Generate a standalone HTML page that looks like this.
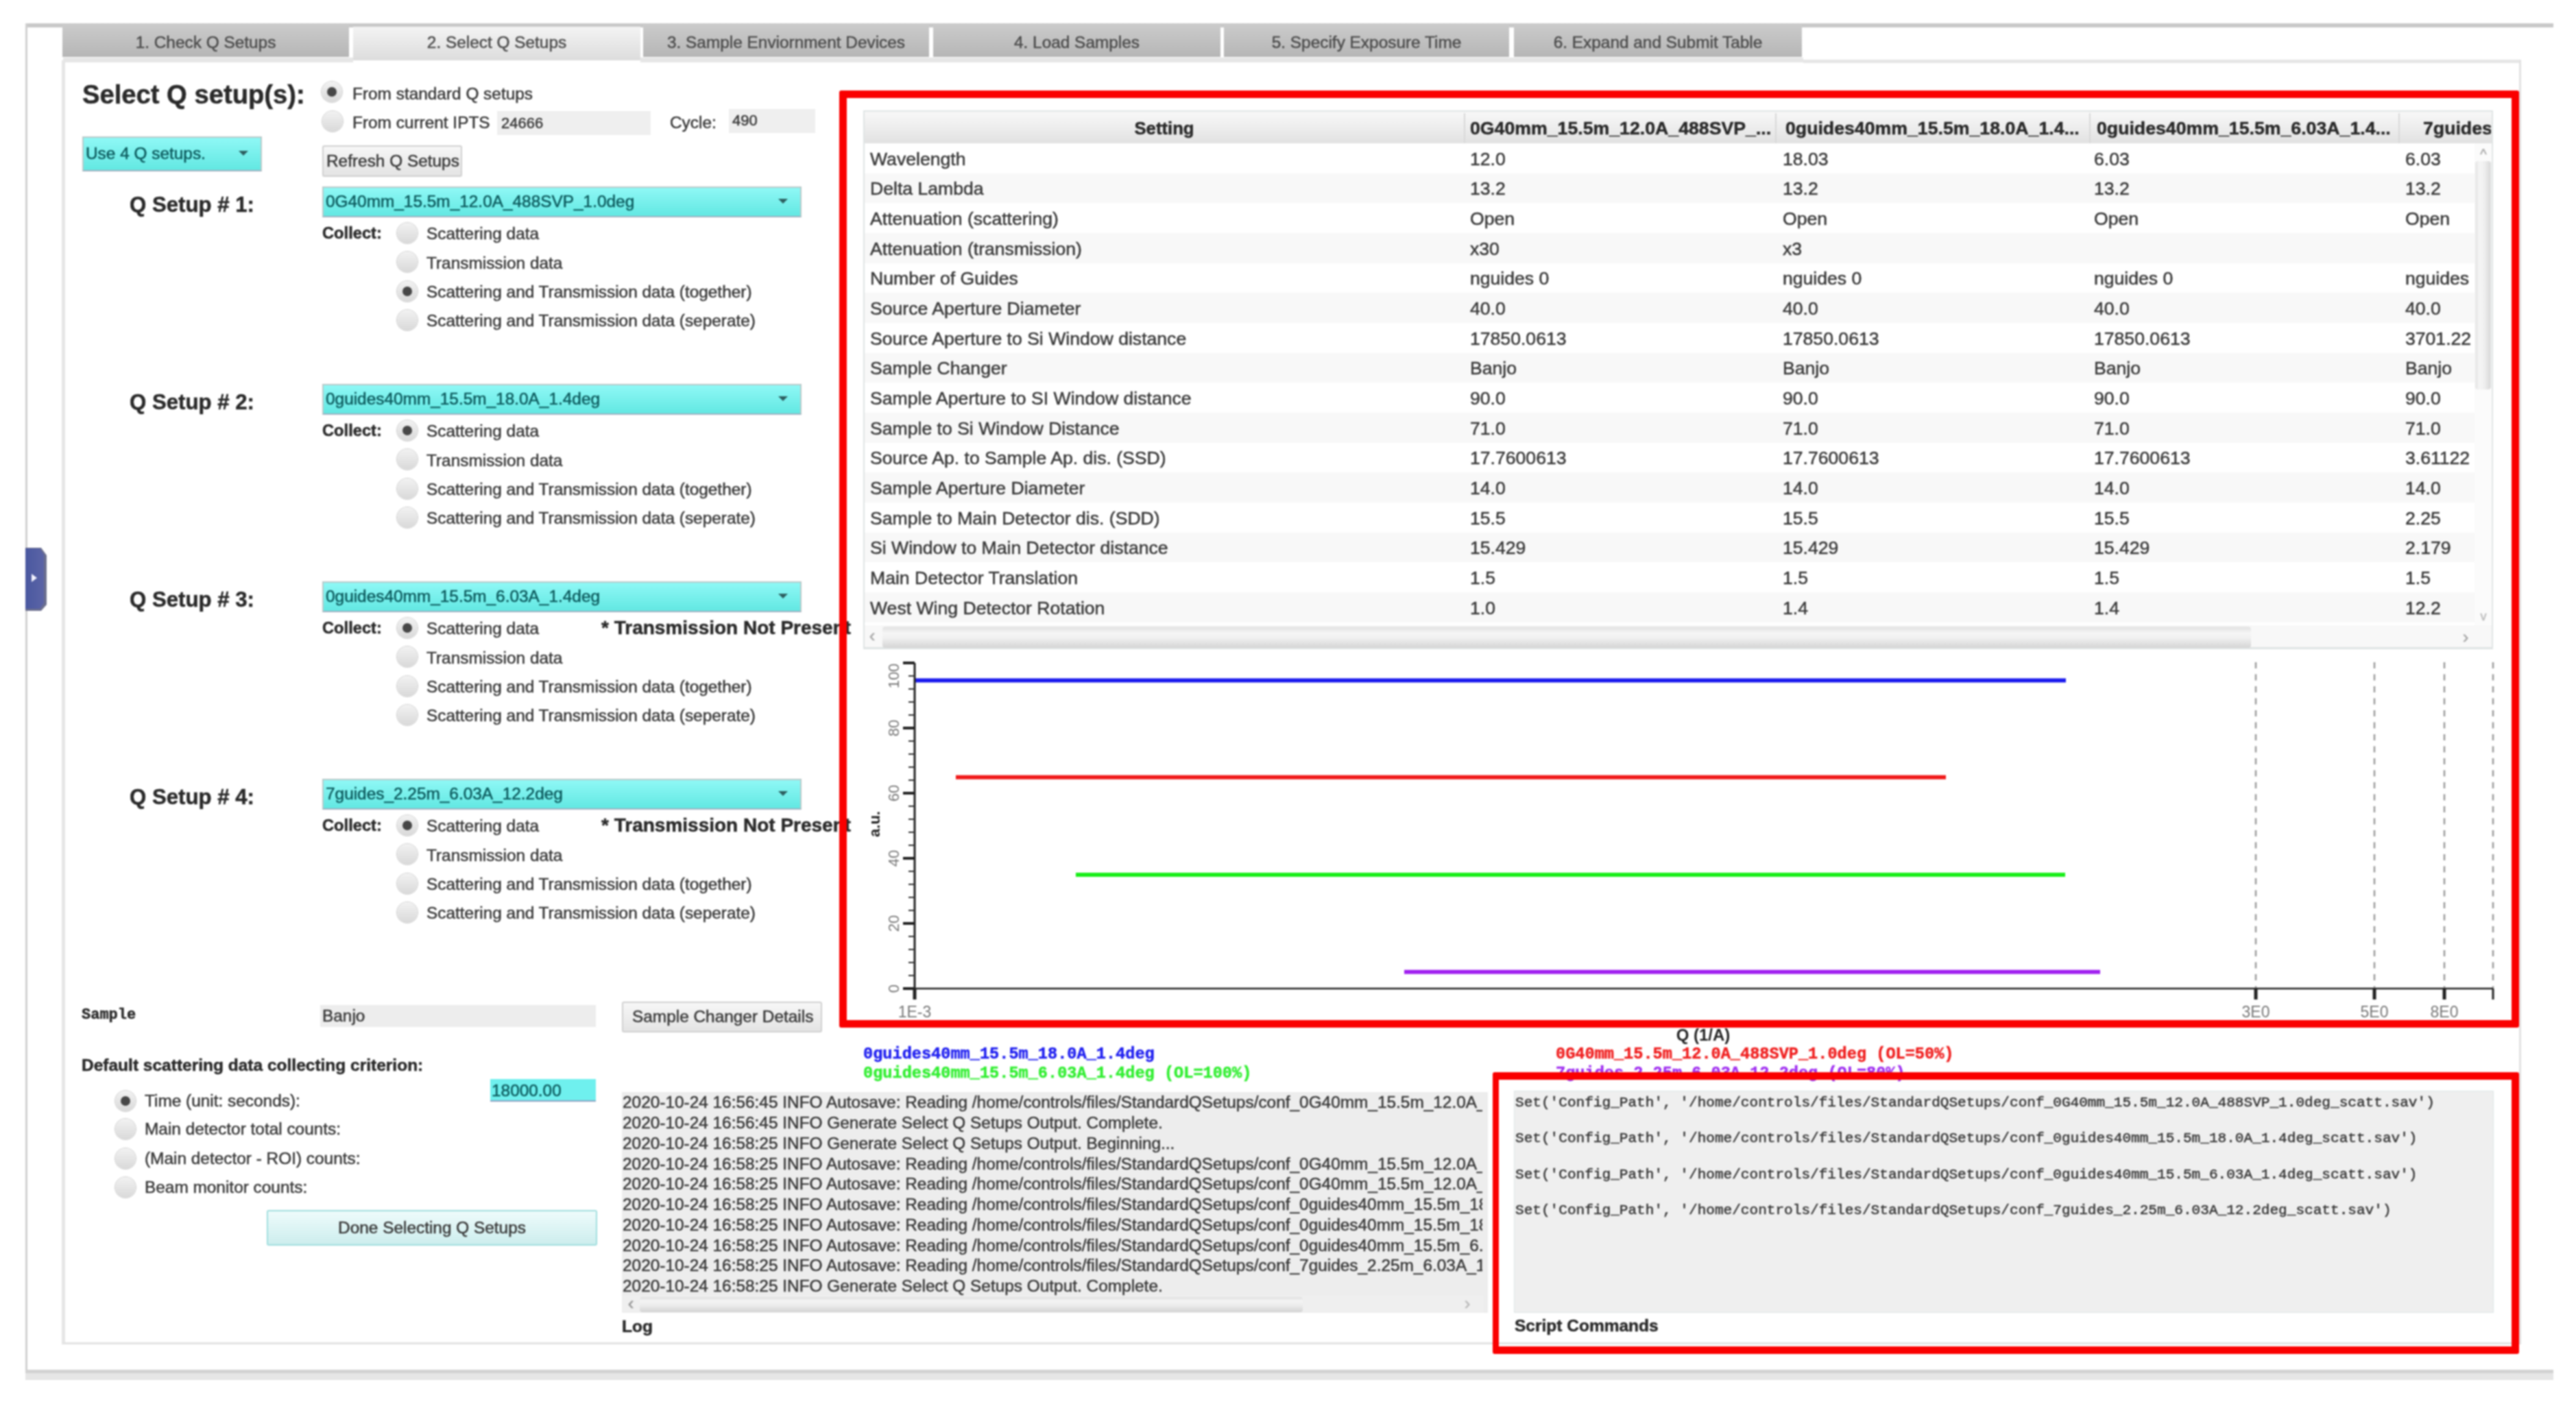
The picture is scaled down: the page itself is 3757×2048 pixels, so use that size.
<!DOCTYPE html>
<html><head><meta charset="utf-8"><style>
html,body{margin:0;padding:0;background:#fff;}
body{width:3757px;height:2048px;position:relative;overflow:hidden;font-family:'Liberation Sans', sans-serif;}
.a{position:absolute;white-space:nowrap;-webkit-text-stroke:0.5px currentColor;}
body{filter:blur(0.9px);}
</style></head><body>
<div class="a" style="left:37px;top:34px;width:3687px;height:5.5px;background:#c9c9c9;"></div><div class="a" style="left:37px;top:34px;width:3px;height:1978px;background:#d0d0d0;"></div><div class="a" style="left:37px;top:1998px;width:3687px;height:5px;background:#d2d2d2;"></div><div class="a" style="left:37px;top:2003px;width:3687px;height:10px;background:#e6e6e6;"></div><div class="a" style="left:91px;top:35px;width:418px;height:48px;background:linear-gradient(#cbcbcb,#b6b6b6);"></div><div class="a" style="left:-700.0px;width:2000px;text-align:center;top:50.3px;font-size:24.4px;line-height:24.4px;font-weight:400;color:#4e4e4e;font-family:'Liberation Sans', sans-serif;">1. Check Q Setups</div><div class="a" style="left:515px;top:39px;width:419px;height:49px;background:linear-gradient(#f4f4f4,#dcdcdc);"></div><div class="a" style="left:-275.5px;width:2000px;text-align:center;top:50.3px;font-size:24.4px;line-height:24.4px;font-weight:400;color:#4e4e4e;font-family:'Liberation Sans', sans-serif;">2. Select Q Setups</div><div class="a" style="left:938px;top:35px;width:417px;height:48px;background:linear-gradient(#cbcbcb,#b6b6b6);"></div><div class="a" style="left:146.5px;width:2000px;text-align:center;top:50.3px;font-size:24.4px;line-height:24.4px;font-weight:400;color:#4e4e4e;font-family:'Liberation Sans', sans-serif;">3. Sample Enviornment Devices</div><div class="a" style="left:1361px;top:35px;width:419px;height:48px;background:linear-gradient(#cbcbcb,#b6b6b6);"></div><div class="a" style="left:570.5px;width:2000px;text-align:center;top:50.3px;font-size:24.4px;line-height:24.4px;font-weight:400;color:#4e4e4e;font-family:'Liberation Sans', sans-serif;">4. Load Samples</div><div class="a" style="left:1785px;top:35px;width:416px;height:48px;background:linear-gradient(#cbcbcb,#b6b6b6);"></div><div class="a" style="left:993.0px;width:2000px;text-align:center;top:50.3px;font-size:24.4px;line-height:24.4px;font-weight:400;color:#4e4e4e;font-family:'Liberation Sans', sans-serif;">5. Specify Exposure Time</div><div class="a" style="left:2208px;top:35px;width:420px;height:48px;background:linear-gradient(#cbcbcb,#b6b6b6);"></div><div class="a" style="left:1418.0px;width:2000px;text-align:center;top:50.3px;font-size:24.4px;line-height:24.4px;font-weight:400;color:#4e4e4e;font-family:'Liberation Sans', sans-serif;">6. Expand and Submit Table</div><div class="a" style="left:92px;top:84px;width:423px;height:7px;background:#e6e6e6;"></div><div class="a" style="left:934px;top:84px;width:1696px;height:7px;background:#e6e6e6;"></div><div class="a" style="left:2630px;top:87px;width:1047px;height:5px;background:#e6e6e6;"></div><div class="a" style="left:90px;top:88px;width:3587px;height:1873px;border:3px solid #e2e2e2;border-left:5px solid #e6e6e6;border-top:none;box-sizing:border-box;"></div><div class="a" style="left:37px;top:799px;width:31px;height:92px;background:#6a6e8e;clip-path:polygon(0 0,23px 0,31px 11px,31px 83px,23px 92px,0 92px);"></div><div class="a" style="left:37px;top:800px;width:27px;height:88px;background:linear-gradient(90deg,#4a58a0,#5b64a6);clip-path:polygon(0 0,21px 0,27px 9px,27px 80px,21px 88px,0 88px);"></div><div class="a" style="left:46px;top:837px;width:0;height:0;border-left:8px solid #f4f4ff;border-top:6px solid transparent;border-bottom:6px solid transparent;"></div><div class="a" style="left:120.0px;top:118.7px;font-size:38.2px;line-height:38.2px;font-weight:700;color:#2a2a2a;font-family:'Liberation Sans', sans-serif;">Select Q setup(s):</div><div class="a" style="left:469px;top:119px;width:30px;height:30px;border-radius:50%;background:linear-gradient(#f2f2f2,#d9d9d9);box-shadow:0 0 0 1px #d0d0d0;"></div><div class="a" style="left:477.0px;top:127.0px;width:14px;height:14px;border-radius:50%;background:#474747;"></div><div class="a" style="left:514.0px;top:125.3px;font-size:24.4px;line-height:24.4px;font-weight:400;color:#3a3a3a;font-family:'Liberation Sans', sans-serif;">From standard Q setups</div><div class="a" style="left:470px;top:162px;width:30px;height:30px;border-radius:50%;background:linear-gradient(#f2f2f2,#d9d9d9);box-shadow:0 0 0 1px #d0d0d0;"></div><div class="a" style="left:514.0px;top:167.3px;font-size:24.4px;line-height:24.4px;font-weight:400;color:#3a3a3a;font-family:'Liberation Sans', sans-serif;">From current IPTS</div><div class="a" style="left:725px;top:162px;width:224px;height:35px;background:#efefef;"></div><div class="a" style="left:731.0px;top:169.4px;font-size:22px;line-height:22px;font-weight:400;color:#3a3a3a;font-family:'Liberation Sans', sans-serif;">24666</div><div class="a" style="left:977.0px;top:167.3px;font-size:24.4px;line-height:24.4px;font-weight:400;color:#3a3a3a;font-family:'Liberation Sans', sans-serif;">Cycle:</div><div class="a" style="left:1063px;top:159px;width:126px;height:35px;background:#efefef;"></div><div class="a" style="left:1068.0px;top:165.4px;font-size:22px;line-height:22px;font-weight:400;color:#3a3a3a;font-family:'Liberation Sans', sans-serif;">490</div><div class="a" style="left:120px;top:199px;width:262px;height:51px;box-sizing:border-box;border:2px solid #b9c9c9;border-bottom-color:#9fb0c0;background:linear-gradient(#8ff8f6,#62e8e2);"></div><div class="a" style="left:125.0px;top:212.3px;font-size:24.4px;line-height:24.4px;font-weight:400;color:#0d5b5e;font-family:'Liberation Sans', sans-serif;">Use 4 Q setups.</div><div class="a" style="left:348px;top:219.5px;width:0;height:0;border-top:7px solid #2d5f60;border-left:7px solid transparent;border-right:7px solid transparent;"></div><div class="a" style="left:470px;top:212px;width:204px;height:46px;box-sizing:border-box;border:2px solid #d0d0d0;border-radius:3px;background:linear-gradient(#f7f7f7,#e4e4e4);"></div><div class="a" style="left:476.0px;top:223.3px;font-size:24.4px;line-height:24.4px;font-weight:400;color:#3a3a3a;font-family:'Liberation Sans', sans-serif;">Refresh Q Setups</div><div class="a" style="left:189.0px;top:282.6px;font-size:31.2px;line-height:31.2px;font-weight:700;color:#2a2a2a;font-family:'Liberation Sans', sans-serif;">Q Setup # 1:</div><div class="a" style="left:470px;top:272px;width:699px;height:45px;box-sizing:border-box;border:2px solid #b9c9c9;border-bottom-color:#9fb0c0;background:linear-gradient(#8ff8f6,#62e8e2);"></div><div class="a" style="left:475.0px;top:282.3px;font-size:24.4px;line-height:24.4px;font-weight:400;color:#0d5b5e;font-family:'Liberation Sans', sans-serif;">0G40mm_15.5m_12.0A_488SVP_1.0deg</div><div class="a" style="left:1135px;top:289.5px;width:0;height:0;border-top:7px solid #2d5f60;border-left:7px solid transparent;border-right:7px solid transparent;"></div><div class="a" style="left:470.0px;top:328.9px;font-size:23.7px;line-height:23.7px;font-weight:700;color:#2a2a2a;font-family:'Liberation Sans', sans-serif;">Collect:</div><div class="a" style="left:579px;top:325.0px;width:30px;height:30px;border-radius:50%;background:linear-gradient(#f2f2f2,#d9d9d9);box-shadow:0 0 0 1px #d0d0d0;"></div><div class="a" style="left:622.0px;top:329.3px;font-size:24.4px;line-height:24.4px;font-weight:400;color:#3a3a3a;font-family:'Liberation Sans', sans-serif;">Scattering data</div><div class="a" style="left:579px;top:367.3px;width:30px;height:30px;border-radius:50%;background:linear-gradient(#f2f2f2,#d9d9d9);box-shadow:0 0 0 1px #d0d0d0;"></div><div class="a" style="left:622.0px;top:371.6px;font-size:24.4px;line-height:24.4px;font-weight:400;color:#3a3a3a;font-family:'Liberation Sans', sans-serif;">Transmission data</div><div class="a" style="left:579px;top:409.6px;width:30px;height:30px;border-radius:50%;background:linear-gradient(#f2f2f2,#d9d9d9);box-shadow:0 0 0 1px #d0d0d0;"></div><div class="a" style="left:587.0px;top:417.6px;width:14px;height:14px;border-radius:50%;background:#474747;"></div><div class="a" style="left:622.0px;top:413.9px;font-size:24.4px;line-height:24.4px;font-weight:400;color:#3a3a3a;font-family:'Liberation Sans', sans-serif;">Scattering and Transmission data (together)</div><div class="a" style="left:579px;top:451.9px;width:30px;height:30px;border-radius:50%;background:linear-gradient(#f2f2f2,#d9d9d9);box-shadow:0 0 0 1px #d0d0d0;"></div><div class="a" style="left:622.0px;top:456.2px;font-size:24.4px;line-height:24.4px;font-weight:400;color:#3a3a3a;font-family:'Liberation Sans', sans-serif;">Scattering and Transmission data (seperate)</div><div class="a" style="left:189.0px;top:570.6px;font-size:31.2px;line-height:31.2px;font-weight:700;color:#2a2a2a;font-family:'Liberation Sans', sans-serif;">Q Setup # 2:</div><div class="a" style="left:470px;top:560px;width:699px;height:45px;box-sizing:border-box;border:2px solid #b9c9c9;border-bottom-color:#9fb0c0;background:linear-gradient(#8ff8f6,#62e8e2);"></div><div class="a" style="left:475.0px;top:570.3px;font-size:24.4px;line-height:24.4px;font-weight:400;color:#0d5b5e;font-family:'Liberation Sans', sans-serif;">0guides40mm_15.5m_18.0A_1.4deg</div><div class="a" style="left:1135px;top:577.5px;width:0;height:0;border-top:7px solid #2d5f60;border-left:7px solid transparent;border-right:7px solid transparent;"></div><div class="a" style="left:470.0px;top:616.9px;font-size:23.7px;line-height:23.7px;font-weight:700;color:#2a2a2a;font-family:'Liberation Sans', sans-serif;">Collect:</div><div class="a" style="left:579px;top:613.0px;width:30px;height:30px;border-radius:50%;background:linear-gradient(#f2f2f2,#d9d9d9);box-shadow:0 0 0 1px #d0d0d0;"></div><div class="a" style="left:587.0px;top:621.0px;width:14px;height:14px;border-radius:50%;background:#474747;"></div><div class="a" style="left:622.0px;top:617.3px;font-size:24.4px;line-height:24.4px;font-weight:400;color:#3a3a3a;font-family:'Liberation Sans', sans-serif;">Scattering data</div><div class="a" style="left:579px;top:655.3px;width:30px;height:30px;border-radius:50%;background:linear-gradient(#f2f2f2,#d9d9d9);box-shadow:0 0 0 1px #d0d0d0;"></div><div class="a" style="left:622.0px;top:659.6px;font-size:24.4px;line-height:24.4px;font-weight:400;color:#3a3a3a;font-family:'Liberation Sans', sans-serif;">Transmission data</div><div class="a" style="left:579px;top:697.6px;width:30px;height:30px;border-radius:50%;background:linear-gradient(#f2f2f2,#d9d9d9);box-shadow:0 0 0 1px #d0d0d0;"></div><div class="a" style="left:622.0px;top:701.9px;font-size:24.4px;line-height:24.4px;font-weight:400;color:#3a3a3a;font-family:'Liberation Sans', sans-serif;">Scattering and Transmission data (together)</div><div class="a" style="left:579px;top:739.9px;width:30px;height:30px;border-radius:50%;background:linear-gradient(#f2f2f2,#d9d9d9);box-shadow:0 0 0 1px #d0d0d0;"></div><div class="a" style="left:622.0px;top:744.2px;font-size:24.4px;line-height:24.4px;font-weight:400;color:#3a3a3a;font-family:'Liberation Sans', sans-serif;">Scattering and Transmission data (seperate)</div><div class="a" style="left:189.0px;top:858.6px;font-size:31.2px;line-height:31.2px;font-weight:700;color:#2a2a2a;font-family:'Liberation Sans', sans-serif;">Q Setup # 3:</div><div class="a" style="left:470px;top:848px;width:699px;height:45px;box-sizing:border-box;border:2px solid #b9c9c9;border-bottom-color:#9fb0c0;background:linear-gradient(#8ff8f6,#62e8e2);"></div><div class="a" style="left:475.0px;top:858.3px;font-size:24.4px;line-height:24.4px;font-weight:400;color:#0d5b5e;font-family:'Liberation Sans', sans-serif;">0guides40mm_15.5m_6.03A_1.4deg</div><div class="a" style="left:1135px;top:865.5px;width:0;height:0;border-top:7px solid #2d5f60;border-left:7px solid transparent;border-right:7px solid transparent;"></div><div class="a" style="left:470.0px;top:904.9px;font-size:23.7px;line-height:23.7px;font-weight:700;color:#2a2a2a;font-family:'Liberation Sans', sans-serif;">Collect:</div><div class="a" style="left:579px;top:901.0px;width:30px;height:30px;border-radius:50%;background:linear-gradient(#f2f2f2,#d9d9d9);box-shadow:0 0 0 1px #d0d0d0;"></div><div class="a" style="left:587.0px;top:909.0px;width:14px;height:14px;border-radius:50%;background:#474747;"></div><div class="a" style="left:622.0px;top:905.3px;font-size:24.4px;line-height:24.4px;font-weight:400;color:#3a3a3a;font-family:'Liberation Sans', sans-serif;">Scattering data</div><div class="a" style="left:579px;top:943.3px;width:30px;height:30px;border-radius:50%;background:linear-gradient(#f2f2f2,#d9d9d9);box-shadow:0 0 0 1px #d0d0d0;"></div><div class="a" style="left:622.0px;top:947.6px;font-size:24.4px;line-height:24.4px;font-weight:400;color:#3a3a3a;font-family:'Liberation Sans', sans-serif;">Transmission data</div><div class="a" style="left:579px;top:985.6px;width:30px;height:30px;border-radius:50%;background:linear-gradient(#f2f2f2,#d9d9d9);box-shadow:0 0 0 1px #d0d0d0;"></div><div class="a" style="left:622.0px;top:989.9px;font-size:24.4px;line-height:24.4px;font-weight:400;color:#3a3a3a;font-family:'Liberation Sans', sans-serif;">Scattering and Transmission data (together)</div><div class="a" style="left:579px;top:1027.9px;width:30px;height:30px;border-radius:50%;background:linear-gradient(#f2f2f2,#d9d9d9);box-shadow:0 0 0 1px #d0d0d0;"></div><div class="a" style="left:622.0px;top:1032.2px;font-size:24.4px;line-height:24.4px;font-weight:400;color:#3a3a3a;font-family:'Liberation Sans', sans-serif;">Scattering and Transmission data (seperate)</div><div class="a" style="left:877.0px;top:901.8px;font-size:28px;line-height:28px;font-weight:700;color:#2a2a2a;font-family:'Liberation Sans', sans-serif;">* Transmission Not Present</div><div class="a" style="left:189.0px;top:1146.6px;font-size:31.2px;line-height:31.2px;font-weight:700;color:#2a2a2a;font-family:'Liberation Sans', sans-serif;">Q Setup # 4:</div><div class="a" style="left:470px;top:1136px;width:699px;height:45px;box-sizing:border-box;border:2px solid #b9c9c9;border-bottom-color:#9fb0c0;background:linear-gradient(#8ff8f6,#62e8e2);"></div><div class="a" style="left:475.0px;top:1146.3px;font-size:24.4px;line-height:24.4px;font-weight:400;color:#0d5b5e;font-family:'Liberation Sans', sans-serif;">7guides_2.25m_6.03A_12.2deg</div><div class="a" style="left:1135px;top:1153.5px;width:0;height:0;border-top:7px solid #2d5f60;border-left:7px solid transparent;border-right:7px solid transparent;"></div><div class="a" style="left:470.0px;top:1192.9px;font-size:23.7px;line-height:23.7px;font-weight:700;color:#2a2a2a;font-family:'Liberation Sans', sans-serif;">Collect:</div><div class="a" style="left:579px;top:1189.0px;width:30px;height:30px;border-radius:50%;background:linear-gradient(#f2f2f2,#d9d9d9);box-shadow:0 0 0 1px #d0d0d0;"></div><div class="a" style="left:587.0px;top:1197.0px;width:14px;height:14px;border-radius:50%;background:#474747;"></div><div class="a" style="left:622.0px;top:1193.3px;font-size:24.4px;line-height:24.4px;font-weight:400;color:#3a3a3a;font-family:'Liberation Sans', sans-serif;">Scattering data</div><div class="a" style="left:579px;top:1231.3px;width:30px;height:30px;border-radius:50%;background:linear-gradient(#f2f2f2,#d9d9d9);box-shadow:0 0 0 1px #d0d0d0;"></div><div class="a" style="left:622.0px;top:1235.6px;font-size:24.4px;line-height:24.4px;font-weight:400;color:#3a3a3a;font-family:'Liberation Sans', sans-serif;">Transmission data</div><div class="a" style="left:579px;top:1273.6px;width:30px;height:30px;border-radius:50%;background:linear-gradient(#f2f2f2,#d9d9d9);box-shadow:0 0 0 1px #d0d0d0;"></div><div class="a" style="left:622.0px;top:1277.9px;font-size:24.4px;line-height:24.4px;font-weight:400;color:#3a3a3a;font-family:'Liberation Sans', sans-serif;">Scattering and Transmission data (together)</div><div class="a" style="left:579px;top:1315.9px;width:30px;height:30px;border-radius:50%;background:linear-gradient(#f2f2f2,#d9d9d9);box-shadow:0 0 0 1px #d0d0d0;"></div><div class="a" style="left:622.0px;top:1320.2px;font-size:24.4px;line-height:24.4px;font-weight:400;color:#3a3a3a;font-family:'Liberation Sans', sans-serif;">Scattering and Transmission data (seperate)</div><div class="a" style="left:877.0px;top:1189.8px;font-size:28px;line-height:28px;font-weight:700;color:#2a2a2a;font-family:'Liberation Sans', sans-serif;">* Transmission Not Present</div><div class="a" style="left:119.0px;top:1470.1px;font-size:22px;line-height:22px;font-weight:700;color:#2a2a2a;font-family:'Liberation Mono', monospace;">Sample</div><div class="a" style="left:467px;top:1466px;width:402px;height:32px;background:#ededed;"></div><div class="a" style="left:470.0px;top:1470.3px;font-size:24.4px;line-height:24.4px;font-weight:400;color:#3a3a3a;font-family:'Liberation Sans', sans-serif;">Banjo</div><div class="a" style="left:907px;top:1461px;width:292px;height:45px;box-sizing:border-box;border:2px solid #d0d0d0;border-radius:3px;background:linear-gradient(#f7f7f7,#e4e4e4);"></div><div class="a" style="left:922.0px;top:1471.3px;font-size:24.4px;line-height:24.4px;font-weight:400;color:#3a3a3a;font-family:'Liberation Sans', sans-serif;">Sample Changer Details</div><div class="a" style="left:119.0px;top:1542.3px;font-size:24.5px;line-height:24.5px;font-weight:700;color:#2a2a2a;font-family:'Liberation Sans', sans-serif;">Default scattering data collecting criterion:</div><div class="a" style="left:715px;top:1574px;width:154px;height:33px;background:#6ff0ee;border-bottom:2px solid #8aa0c0;box-sizing:border-box;"></div><div class="a" style="left:717.0px;top:1579.3px;font-size:24.4px;line-height:24.4px;font-weight:400;color:#0d5b5e;font-family:'Liberation Sans', sans-serif;">18000.00</div><div class="a" style="left:168px;top:1591px;width:30px;height:30px;border-radius:50%;background:linear-gradient(#f2f2f2,#d9d9d9);box-shadow:0 0 0 1px #d0d0d0;"></div><div class="a" style="left:176.0px;top:1599.0px;width:14px;height:14px;border-radius:50%;background:#474747;"></div><div class="a" style="left:211.0px;top:1594.3px;font-size:24.4px;line-height:24.4px;font-weight:400;color:#3a3a3a;font-family:'Liberation Sans', sans-serif;">Time (unit: seconds):</div><div class="a" style="left:168px;top:1632px;width:30px;height:30px;border-radius:50%;background:linear-gradient(#f2f2f2,#d9d9d9);box-shadow:0 0 0 1px #d0d0d0;"></div><div class="a" style="left:211.0px;top:1635.3px;font-size:24.4px;line-height:24.4px;font-weight:400;color:#3a3a3a;font-family:'Liberation Sans', sans-serif;">Main detector total counts:</div><div class="a" style="left:168px;top:1675px;width:30px;height:30px;border-radius:50%;background:linear-gradient(#f2f2f2,#d9d9d9);box-shadow:0 0 0 1px #d0d0d0;"></div><div class="a" style="left:211.0px;top:1678.3px;font-size:24.4px;line-height:24.4px;font-weight:400;color:#3a3a3a;font-family:'Liberation Sans', sans-serif;">(Main detector - ROI) counts:</div><div class="a" style="left:168px;top:1717px;width:30px;height:30px;border-radius:50%;background:linear-gradient(#f2f2f2,#d9d9d9);box-shadow:0 0 0 1px #d0d0d0;"></div><div class="a" style="left:211.0px;top:1720.3px;font-size:24.4px;line-height:24.4px;font-weight:400;color:#3a3a3a;font-family:'Liberation Sans', sans-serif;">Beam monitor counts:</div><div class="a" style="left:389px;top:1765px;width:482px;height:52px;box-sizing:border-box;border:2px solid #9fdede;border-radius:3px;background:linear-gradient(#eefbfb,#cdeeee);"></div><div class="a" style="left:-370.0px;width:2000px;text-align:center;top:1779.3px;font-size:24.4px;line-height:24.4px;font-weight:400;color:#3a3a3a;font-family:'Liberation Sans', sans-serif;">Done Selecting Q Setups</div><div class="a" style="left:907px;top:1593px;width:1263px;height:322px;background:#ededed;"></div><div class="a" style="left:907px;top:1593px;width:1255px;height:300px;overflow:hidden;"><div class="a" style="left:1px;top:3.3px;font-size:24.4px;line-height:24.4px;color:#3a3a3a;white-space:nowrap;">2020-10-24 16:56:45 INFO Autosave: Reading /home/controls/files/StandardQSetups/conf_0G40mm_15.5m_12.0A_488SVP_1.0deg</div><div class="a" style="left:1px;top:33.1px;font-size:24.4px;line-height:24.4px;color:#3a3a3a;white-space:nowrap;">2020-10-24 16:56:45 INFO Generate Select Q Setups Output. Complete.</div><div class="a" style="left:1px;top:62.8px;font-size:24.4px;line-height:24.4px;color:#3a3a3a;white-space:nowrap;">2020-10-24 16:58:25 INFO Generate Select Q Setups Output. Beginning...</div><div class="a" style="left:1px;top:92.6px;font-size:24.4px;line-height:24.4px;color:#3a3a3a;white-space:nowrap;">2020-10-24 16:58:25 INFO Autosave: Reading /home/controls/files/StandardQSetups/conf_0G40mm_15.5m_12.0A_488SVP_1.0deg</div><div class="a" style="left:1px;top:122.3px;font-size:24.4px;line-height:24.4px;color:#3a3a3a;white-space:nowrap;">2020-10-24 16:58:25 INFO Autosave: Reading /home/controls/files/StandardQSetups/conf_0G40mm_15.5m_12.0A_488SVP_1.0deg</div><div class="a" style="left:1px;top:152.1px;font-size:24.4px;line-height:24.4px;color:#3a3a3a;white-space:nowrap;">2020-10-24 16:58:25 INFO Autosave: Reading /home/controls/files/StandardQSetups/conf_0guides40mm_15.5m_18.0A_1.4deg</div><div class="a" style="left:1px;top:181.8px;font-size:24.4px;line-height:24.4px;color:#3a3a3a;white-space:nowrap;">2020-10-24 16:58:25 INFO Autosave: Reading /home/controls/files/StandardQSetups/conf_0guides40mm_15.5m_18.0A_1.4deg</div><div class="a" style="left:1px;top:211.6px;font-size:24.4px;line-height:24.4px;color:#3a3a3a;white-space:nowrap;">2020-10-24 16:58:25 INFO Autosave: Reading /home/controls/files/StandardQSetups/conf_0guides40mm_15.5m_6.03A_1.4deg</div><div class="a" style="left:1px;top:241.3px;font-size:24.4px;line-height:24.4px;color:#3a3a3a;white-space:nowrap;">2020-10-24 16:58:25 INFO Autosave: Reading /home/controls/files/StandardQSetups/conf_7guides_2.25m_6.03A_12.2deg</div><div class="a" style="left:1px;top:271.1px;font-size:24.4px;line-height:24.4px;color:#3a3a3a;white-space:nowrap;">2020-10-24 16:58:25 INFO Generate Select Q Setups Output. Complete.</div></div><div class="a" style="left:907px;top:1890px;width:1257px;height:25px;background:#efefef;"></div><div class="a" style="left:933px;top:1892px;width:967px;height:22px;background:linear-gradient(#dedede 0%,#f4f4f4 25%,#ececec 55%,#d3d3d3 100%);border-radius:4px;"></div><div class="a" style="left:-80.0px;width:2000px;text-align:center;top:1888.0px;font-size:26px;line-height:26px;font-weight:400;color:#999;font-family:'Liberation Sans', sans-serif;">‹</div><div class="a" style="left:1140.0px;width:2000px;text-align:center;top:1888.0px;font-size:26px;line-height:26px;font-weight:400;color:#bbb;font-family:'Liberation Sans', sans-serif;">›</div><div class="a" style="left:907.0px;top:1922.8px;font-size:24.5px;line-height:24.5px;font-weight:700;color:#2a2a2a;font-family:'Liberation Sans', sans-serif;">Log</div><div class="a" style="left:2209px;top:1592px;width:1427px;height:322px;background:#efefef;box-shadow:0 0 0 1px #dde6e6;"></div><div class="a" style="left:2210.0px;top:1597.8px;font-size:21.08px;line-height:21.08px;font-weight:400;color:#383838;font-family:'Liberation Mono', monospace;">Set(&#x27;Config_Path&#x27;, &#x27;/home/controls/files/StandardQSetups/conf_0G40mm_15.5m_12.0A_488SVP_1.0deg_scatt.sav&#x27;)</div><div class="a" style="left:2210.0px;top:1650.2px;font-size:21.08px;line-height:21.08px;font-weight:400;color:#383838;font-family:'Liberation Mono', monospace;">Set(&#x27;Config_Path&#x27;, &#x27;/home/controls/files/StandardQSetups/conf_0guides40mm_15.5m_18.0A_1.4deg_scatt.sav&#x27;)</div><div class="a" style="left:2210.0px;top:1702.6px;font-size:21.08px;line-height:21.08px;font-weight:400;color:#383838;font-family:'Liberation Mono', monospace;">Set(&#x27;Config_Path&#x27;, &#x27;/home/controls/files/StandardQSetups/conf_0guides40mm_15.5m_6.03A_1.4deg_scatt.sav&#x27;)</div><div class="a" style="left:2210.0px;top:1755.0px;font-size:21.08px;line-height:21.08px;font-weight:400;color:#383838;font-family:'Liberation Mono', monospace;">Set(&#x27;Config_Path&#x27;, &#x27;/home/controls/files/StandardQSetups/conf_7guides_2.25m_6.03A_12.2deg_scatt.sav&#x27;)</div><div class="a" style="left:2209.0px;top:1922.3px;font-size:24.5px;line-height:24.5px;font-weight:700;color:#2a2a2a;font-family:'Liberation Sans', sans-serif;">Script Commands</div><div class="a" style="left:1259px;top:161px;width:2377px;height:786px;background:#fff;border:2px solid #dfe4e4;box-sizing:border-box;"></div><div class="a" style="left:1261px;top:163px;width:2373px;height:46px;background:linear-gradient(#f8f8f8,#e2e2e2);"></div><div class="a" style="left:2135px;top:165px;width:2px;height:44px;background:#d8d8d8;"></div><div class="a" style="left:2589px;top:165px;width:2px;height:44px;background:#d8d8d8;"></div><div class="a" style="left:3047px;top:165px;width:2px;height:44px;background:#d8d8d8;"></div><div class="a" style="left:3498px;top:165px;width:2px;height:44px;background:#d8d8d8;"></div><div class="a" style="left:698.0px;width:2000px;text-align:center;top:175.2px;font-size:25.7px;line-height:25.7px;font-weight:700;color:#2a2a2a;font-family:'Liberation Sans', sans-serif;">Setting</div><div class="a" style="left:2144.0px;top:174.4px;font-size:26.7px;line-height:26.7px;font-weight:700;color:#2a2a2a;font-family:'Liberation Sans', sans-serif;">0G40mm_15.5m_12.0A_488SVP_...</div><div class="a" style="left:2604.0px;top:174.4px;font-size:26.7px;line-height:26.7px;font-weight:700;color:#2a2a2a;font-family:'Liberation Sans', sans-serif;">0guides40mm_15.5m_18.0A_1.4...</div><div class="a" style="left:3058.0px;top:174.4px;font-size:26.7px;line-height:26.7px;font-weight:700;color:#2a2a2a;font-family:'Liberation Sans', sans-serif;">0guides40mm_15.5m_6.03A_1.4...</div><div class="a" style="left:3498px;top:161px;width:135px;height:48px;overflow:hidden;"><div class="a" style="left:36px;top:13.4px;font-size:26.7px;line-height:26.7px;font-weight:700;color:#2a2a2a;white-space:nowrap;">7guides_2.25m_6.03A_1.4...</div></div><div class="a" style="left:1269.0px;top:218.5px;font-size:26.6px;line-height:26.6px;font-weight:400;color:#3a3a3a;font-family:'Liberation Sans', sans-serif;">Wavelength</div><div class="a" style="left:2144.0px;top:218.5px;font-size:26.6px;line-height:26.6px;font-weight:400;color:#3a3a3a;font-family:'Liberation Sans', sans-serif;">12.0</div><div class="a" style="left:2600.0px;top:218.5px;font-size:26.6px;line-height:26.6px;font-weight:400;color:#3a3a3a;font-family:'Liberation Sans', sans-serif;">18.03</div><div class="a" style="left:3054.0px;top:218.5px;font-size:26.6px;line-height:26.6px;font-weight:400;color:#3a3a3a;font-family:'Liberation Sans', sans-serif;">6.03</div><div class="a" style="left:3508px;top:218.5px;width:101px;overflow:hidden;font-size:26.6px;line-height:26.6px;color:#3a3a3a;white-space:nowrap;">6.03</div><div class="a" style="left:1261px;top:253px;width:2348px;height:43px;background:#f8f8f8;"></div><div class="a" style="left:1269.0px;top:262.2px;font-size:26.6px;line-height:26.6px;font-weight:400;color:#3a3a3a;font-family:'Liberation Sans', sans-serif;">Delta Lambda</div><div class="a" style="left:2144.0px;top:262.2px;font-size:26.6px;line-height:26.6px;font-weight:400;color:#3a3a3a;font-family:'Liberation Sans', sans-serif;">13.2</div><div class="a" style="left:2600.0px;top:262.2px;font-size:26.6px;line-height:26.6px;font-weight:400;color:#3a3a3a;font-family:'Liberation Sans', sans-serif;">13.2</div><div class="a" style="left:3054.0px;top:262.2px;font-size:26.6px;line-height:26.6px;font-weight:400;color:#3a3a3a;font-family:'Liberation Sans', sans-serif;">13.2</div><div class="a" style="left:3508px;top:262.2px;width:101px;overflow:hidden;font-size:26.6px;line-height:26.6px;color:#3a3a3a;white-space:nowrap;">13.2</div><div class="a" style="left:1269.0px;top:305.8px;font-size:26.6px;line-height:26.6px;font-weight:400;color:#3a3a3a;font-family:'Liberation Sans', sans-serif;">Attenuation (scattering)</div><div class="a" style="left:2144.0px;top:305.8px;font-size:26.6px;line-height:26.6px;font-weight:400;color:#3a3a3a;font-family:'Liberation Sans', sans-serif;">Open</div><div class="a" style="left:2600.0px;top:305.8px;font-size:26.6px;line-height:26.6px;font-weight:400;color:#3a3a3a;font-family:'Liberation Sans', sans-serif;">Open</div><div class="a" style="left:3054.0px;top:305.8px;font-size:26.6px;line-height:26.6px;font-weight:400;color:#3a3a3a;font-family:'Liberation Sans', sans-serif;">Open</div><div class="a" style="left:3508px;top:305.8px;width:101px;overflow:hidden;font-size:26.6px;line-height:26.6px;color:#3a3a3a;white-space:nowrap;">Open</div><div class="a" style="left:1261px;top:340px;width:2348px;height:44px;background:#f8f8f8;"></div><div class="a" style="left:1269.0px;top:349.5px;font-size:26.6px;line-height:26.6px;font-weight:400;color:#3a3a3a;font-family:'Liberation Sans', sans-serif;">Attenuation (transmission)</div><div class="a" style="left:2144.0px;top:349.5px;font-size:26.6px;line-height:26.6px;font-weight:400;color:#3a3a3a;font-family:'Liberation Sans', sans-serif;">x30</div><div class="a" style="left:2600.0px;top:349.5px;font-size:26.6px;line-height:26.6px;font-weight:400;color:#3a3a3a;font-family:'Liberation Sans', sans-serif;">x3</div><div class="a" style="left:3054.0px;top:349.5px;font-size:26.6px;line-height:26.6px;font-weight:400;color:#3a3a3a;font-family:'Liberation Sans', sans-serif;"></div><div class="a" style="left:3508px;top:349.5px;width:101px;overflow:hidden;font-size:26.6px;line-height:26.6px;color:#3a3a3a;white-space:nowrap;"></div><div class="a" style="left:1269.0px;top:393.2px;font-size:26.6px;line-height:26.6px;font-weight:400;color:#3a3a3a;font-family:'Liberation Sans', sans-serif;">Number of Guides</div><div class="a" style="left:2144.0px;top:393.2px;font-size:26.6px;line-height:26.6px;font-weight:400;color:#3a3a3a;font-family:'Liberation Sans', sans-serif;">nguides 0</div><div class="a" style="left:2600.0px;top:393.2px;font-size:26.6px;line-height:26.6px;font-weight:400;color:#3a3a3a;font-family:'Liberation Sans', sans-serif;">nguides 0</div><div class="a" style="left:3054.0px;top:393.2px;font-size:26.6px;line-height:26.6px;font-weight:400;color:#3a3a3a;font-family:'Liberation Sans', sans-serif;">nguides 0</div><div class="a" style="left:3508px;top:393.2px;width:101px;overflow:hidden;font-size:26.6px;line-height:26.6px;color:#3a3a3a;white-space:nowrap;">nguides 7</div><div class="a" style="left:1261px;top:427px;width:2348px;height:44px;background:#f8f8f8;"></div><div class="a" style="left:1269.0px;top:436.8px;font-size:26.6px;line-height:26.6px;font-weight:400;color:#3a3a3a;font-family:'Liberation Sans', sans-serif;">Source Aperture Diameter</div><div class="a" style="left:2144.0px;top:436.8px;font-size:26.6px;line-height:26.6px;font-weight:400;color:#3a3a3a;font-family:'Liberation Sans', sans-serif;">40.0</div><div class="a" style="left:2600.0px;top:436.8px;font-size:26.6px;line-height:26.6px;font-weight:400;color:#3a3a3a;font-family:'Liberation Sans', sans-serif;">40.0</div><div class="a" style="left:3054.0px;top:436.8px;font-size:26.6px;line-height:26.6px;font-weight:400;color:#3a3a3a;font-family:'Liberation Sans', sans-serif;">40.0</div><div class="a" style="left:3508px;top:436.8px;width:101px;overflow:hidden;font-size:26.6px;line-height:26.6px;color:#3a3a3a;white-space:nowrap;">40.0</div><div class="a" style="left:1269.0px;top:480.5px;font-size:26.6px;line-height:26.6px;font-weight:400;color:#3a3a3a;font-family:'Liberation Sans', sans-serif;">Source Aperture to Si Window distance</div><div class="a" style="left:2144.0px;top:480.5px;font-size:26.6px;line-height:26.6px;font-weight:400;color:#3a3a3a;font-family:'Liberation Sans', sans-serif;">17850.0613</div><div class="a" style="left:2600.0px;top:480.5px;font-size:26.6px;line-height:26.6px;font-weight:400;color:#3a3a3a;font-family:'Liberation Sans', sans-serif;">17850.0613</div><div class="a" style="left:3054.0px;top:480.5px;font-size:26.6px;line-height:26.6px;font-weight:400;color:#3a3a3a;font-family:'Liberation Sans', sans-serif;">17850.0613</div><div class="a" style="left:3508px;top:480.5px;width:101px;overflow:hidden;font-size:26.6px;line-height:26.6px;color:#3a3a3a;white-space:nowrap;">3701.22</div><div class="a" style="left:1261px;top:515px;width:2348px;height:43px;background:#f8f8f8;"></div><div class="a" style="left:1269.0px;top:524.2px;font-size:26.6px;line-height:26.6px;font-weight:400;color:#3a3a3a;font-family:'Liberation Sans', sans-serif;">Sample Changer</div><div class="a" style="left:2144.0px;top:524.2px;font-size:26.6px;line-height:26.6px;font-weight:400;color:#3a3a3a;font-family:'Liberation Sans', sans-serif;">Banjo</div><div class="a" style="left:2600.0px;top:524.2px;font-size:26.6px;line-height:26.6px;font-weight:400;color:#3a3a3a;font-family:'Liberation Sans', sans-serif;">Banjo</div><div class="a" style="left:3054.0px;top:524.2px;font-size:26.6px;line-height:26.6px;font-weight:400;color:#3a3a3a;font-family:'Liberation Sans', sans-serif;">Banjo</div><div class="a" style="left:3508px;top:524.2px;width:101px;overflow:hidden;font-size:26.6px;line-height:26.6px;color:#3a3a3a;white-space:nowrap;">Banjo</div><div class="a" style="left:1269.0px;top:567.8px;font-size:26.6px;line-height:26.6px;font-weight:400;color:#3a3a3a;font-family:'Liberation Sans', sans-serif;">Sample Aperture to SI Window distance</div><div class="a" style="left:2144.0px;top:567.8px;font-size:26.6px;line-height:26.6px;font-weight:400;color:#3a3a3a;font-family:'Liberation Sans', sans-serif;">90.0</div><div class="a" style="left:2600.0px;top:567.8px;font-size:26.6px;line-height:26.6px;font-weight:400;color:#3a3a3a;font-family:'Liberation Sans', sans-serif;">90.0</div><div class="a" style="left:3054.0px;top:567.8px;font-size:26.6px;line-height:26.6px;font-weight:400;color:#3a3a3a;font-family:'Liberation Sans', sans-serif;">90.0</div><div class="a" style="left:3508px;top:567.8px;width:101px;overflow:hidden;font-size:26.6px;line-height:26.6px;color:#3a3a3a;white-space:nowrap;">90.0</div><div class="a" style="left:1261px;top:602px;width:2348px;height:44px;background:#f8f8f8;"></div><div class="a" style="left:1269.0px;top:611.5px;font-size:26.6px;line-height:26.6px;font-weight:400;color:#3a3a3a;font-family:'Liberation Sans', sans-serif;">Sample to Si Window Distance</div><div class="a" style="left:2144.0px;top:611.5px;font-size:26.6px;line-height:26.6px;font-weight:400;color:#3a3a3a;font-family:'Liberation Sans', sans-serif;">71.0</div><div class="a" style="left:2600.0px;top:611.5px;font-size:26.6px;line-height:26.6px;font-weight:400;color:#3a3a3a;font-family:'Liberation Sans', sans-serif;">71.0</div><div class="a" style="left:3054.0px;top:611.5px;font-size:26.6px;line-height:26.6px;font-weight:400;color:#3a3a3a;font-family:'Liberation Sans', sans-serif;">71.0</div><div class="a" style="left:3508px;top:611.5px;width:101px;overflow:hidden;font-size:26.6px;line-height:26.6px;color:#3a3a3a;white-space:nowrap;">71.0</div><div class="a" style="left:1269.0px;top:655.2px;font-size:26.6px;line-height:26.6px;font-weight:400;color:#3a3a3a;font-family:'Liberation Sans', sans-serif;">Source Ap. to Sample Ap. dis. (SSD)</div><div class="a" style="left:2144.0px;top:655.2px;font-size:26.6px;line-height:26.6px;font-weight:400;color:#3a3a3a;font-family:'Liberation Sans', sans-serif;">17.7600613</div><div class="a" style="left:2600.0px;top:655.2px;font-size:26.6px;line-height:26.6px;font-weight:400;color:#3a3a3a;font-family:'Liberation Sans', sans-serif;">17.7600613</div><div class="a" style="left:3054.0px;top:655.2px;font-size:26.6px;line-height:26.6px;font-weight:400;color:#3a3a3a;font-family:'Liberation Sans', sans-serif;">17.7600613</div><div class="a" style="left:3508px;top:655.2px;width:101px;overflow:hidden;font-size:26.6px;line-height:26.6px;color:#3a3a3a;white-space:nowrap;">3.61122</div><div class="a" style="left:1261px;top:689px;width:2348px;height:44px;background:#f8f8f8;"></div><div class="a" style="left:1269.0px;top:698.9px;font-size:26.6px;line-height:26.6px;font-weight:400;color:#3a3a3a;font-family:'Liberation Sans', sans-serif;">Sample Aperture Diameter</div><div class="a" style="left:2144.0px;top:698.9px;font-size:26.6px;line-height:26.6px;font-weight:400;color:#3a3a3a;font-family:'Liberation Sans', sans-serif;">14.0</div><div class="a" style="left:2600.0px;top:698.9px;font-size:26.6px;line-height:26.6px;font-weight:400;color:#3a3a3a;font-family:'Liberation Sans', sans-serif;">14.0</div><div class="a" style="left:3054.0px;top:698.9px;font-size:26.6px;line-height:26.6px;font-weight:400;color:#3a3a3a;font-family:'Liberation Sans', sans-serif;">14.0</div><div class="a" style="left:3508px;top:698.9px;width:101px;overflow:hidden;font-size:26.6px;line-height:26.6px;color:#3a3a3a;white-space:nowrap;">14.0</div><div class="a" style="left:1269.0px;top:742.5px;font-size:26.6px;line-height:26.6px;font-weight:400;color:#3a3a3a;font-family:'Liberation Sans', sans-serif;">Sample to Main Detector dis. (SDD)</div><div class="a" style="left:2144.0px;top:742.5px;font-size:26.6px;line-height:26.6px;font-weight:400;color:#3a3a3a;font-family:'Liberation Sans', sans-serif;">15.5</div><div class="a" style="left:2600.0px;top:742.5px;font-size:26.6px;line-height:26.6px;font-weight:400;color:#3a3a3a;font-family:'Liberation Sans', sans-serif;">15.5</div><div class="a" style="left:3054.0px;top:742.5px;font-size:26.6px;line-height:26.6px;font-weight:400;color:#3a3a3a;font-family:'Liberation Sans', sans-serif;">15.5</div><div class="a" style="left:3508px;top:742.5px;width:101px;overflow:hidden;font-size:26.6px;line-height:26.6px;color:#3a3a3a;white-space:nowrap;">2.25</div><div class="a" style="left:1261px;top:777px;width:2348px;height:43px;background:#f8f8f8;"></div><div class="a" style="left:1269.0px;top:786.2px;font-size:26.6px;line-height:26.6px;font-weight:400;color:#3a3a3a;font-family:'Liberation Sans', sans-serif;">Si Window to Main Detector distance</div><div class="a" style="left:2144.0px;top:786.2px;font-size:26.6px;line-height:26.6px;font-weight:400;color:#3a3a3a;font-family:'Liberation Sans', sans-serif;">15.429</div><div class="a" style="left:2600.0px;top:786.2px;font-size:26.6px;line-height:26.6px;font-weight:400;color:#3a3a3a;font-family:'Liberation Sans', sans-serif;">15.429</div><div class="a" style="left:3054.0px;top:786.2px;font-size:26.6px;line-height:26.6px;font-weight:400;color:#3a3a3a;font-family:'Liberation Sans', sans-serif;">15.429</div><div class="a" style="left:3508px;top:786.2px;width:101px;overflow:hidden;font-size:26.6px;line-height:26.6px;color:#3a3a3a;white-space:nowrap;">2.179</div><div class="a" style="left:1269.0px;top:829.9px;font-size:26.6px;line-height:26.6px;font-weight:400;color:#3a3a3a;font-family:'Liberation Sans', sans-serif;">Main Detector Translation</div><div class="a" style="left:2144.0px;top:829.9px;font-size:26.6px;line-height:26.6px;font-weight:400;color:#3a3a3a;font-family:'Liberation Sans', sans-serif;">1.5</div><div class="a" style="left:2600.0px;top:829.9px;font-size:26.6px;line-height:26.6px;font-weight:400;color:#3a3a3a;font-family:'Liberation Sans', sans-serif;">1.5</div><div class="a" style="left:3054.0px;top:829.9px;font-size:26.6px;line-height:26.6px;font-weight:400;color:#3a3a3a;font-family:'Liberation Sans', sans-serif;">1.5</div><div class="a" style="left:3508px;top:829.9px;width:101px;overflow:hidden;font-size:26.6px;line-height:26.6px;color:#3a3a3a;white-space:nowrap;">1.5</div><div class="a" style="left:1261px;top:864px;width:2348px;height:44px;background:#f8f8f8;"></div><div class="a" style="left:1269.0px;top:873.5px;font-size:26.6px;line-height:26.6px;font-weight:400;color:#3a3a3a;font-family:'Liberation Sans', sans-serif;">West Wing Detector Rotation</div><div class="a" style="left:2144.0px;top:873.5px;font-size:26.6px;line-height:26.6px;font-weight:400;color:#3a3a3a;font-family:'Liberation Sans', sans-serif;">1.0</div><div class="a" style="left:2600.0px;top:873.5px;font-size:26.6px;line-height:26.6px;font-weight:400;color:#3a3a3a;font-family:'Liberation Sans', sans-serif;">1.4</div><div class="a" style="left:3054.0px;top:873.5px;font-size:26.6px;line-height:26.6px;font-weight:400;color:#3a3a3a;font-family:'Liberation Sans', sans-serif;">1.4</div><div class="a" style="left:3508px;top:873.5px;width:101px;overflow:hidden;font-size:26.6px;line-height:26.6px;color:#3a3a3a;white-space:nowrap;">12.2</div><div class="a" style="left:3609px;top:209px;width:24px;height:703px;background:#fbfbfb;"></div><div class="a" style="left:3610px;top:235px;width:23px;height:333px;background:linear-gradient(90deg,#e4e4e4 0%,#f6f6f6 30%,#eeeeee 60%,#d8d8d8 100%);border-radius:4px;"></div><div class="a" style="left:2622.0px;width:2000px;text-align:center;top:215.1px;font-size:20px;line-height:20px;font-weight:400;color:#aaa;font-family:'Liberation Sans', sans-serif;">^</div><div class="a" style="left:2622.0px;width:2000px;text-align:center;top:889.8px;font-size:18px;line-height:18px;font-weight:400;color:#bbb;font-family:'Liberation Sans', sans-serif;">v</div><div class="a" style="left:1261px;top:912px;width:2373px;height:34px;background:#f8f8f8;border-bottom:2px solid #dfe4e4;box-sizing:border-box;"></div><div class="a" style="left:1287px;top:914px;width:1996px;height:31px;background:linear-gradient(#e4e4e4 0%,#e8e8e8 12%,#f6f6f6 30%,#f0f0f0 55%,#dddddd 85%,#d6d6d6 100%);border-radius:4px;"></div><div class="a" style="left:272.0px;width:2000px;text-align:center;top:914.0px;font-size:26px;line-height:26px;font-weight:400;color:#aaa;font-family:'Liberation Sans', sans-serif;">‹</div><div class="a" style="left:2596.0px;width:2000px;text-align:center;top:916.0px;font-size:26px;line-height:26px;font-weight:400;color:#aaa;font-family:'Liberation Sans', sans-serif;">›</div><svg class="a" style="left:0;top:0" width="3757" height="2048"><line x1="3290" y1="966" x2="3290" y2="1442" stroke="#9a9a9a" stroke-width="2.5" stroke-dasharray="9 8.5"/><line x1="3463" y1="966" x2="3463" y2="1442" stroke="#9a9a9a" stroke-width="2.5" stroke-dasharray="9 8.5"/><line x1="3565" y1="966" x2="3565" y2="1442" stroke="#9a9a9a" stroke-width="2.5" stroke-dasharray="9 8.5"/><line x1="3636" y1="966" x2="3636" y2="1442" stroke="#9a9a9a" stroke-width="2.5" stroke-dasharray="9 8.5"/><line x1="1334" y1="992.4" x2="3013" y2="992.4" stroke="#1a1aee" stroke-width="6"/><line x1="1394" y1="1133.8" x2="2838" y2="1133.8" stroke="#f01a1a" stroke-width="6"/><line x1="1569" y1="1276" x2="3012" y2="1276" stroke="#1aee1a" stroke-width="6"/><line x1="2048" y1="1417.7" x2="3063" y2="1417.7" stroke="#a020f0" stroke-width="6"/><line x1="1334" y1="967" x2="1334" y2="1442" stroke="#222" stroke-width="3"/><line x1="1334" y1="1442" x2="3636" y2="1442" stroke="#222" stroke-width="2.5"/><line x1="1317" y1="1442.0" x2="1334" y2="1442.0" stroke="#222" stroke-width="4"/><line x1="1325" y1="1423.0" x2="1334" y2="1423.0" stroke="#333" stroke-width="2"/><line x1="1325" y1="1404.0" x2="1334" y2="1404.0" stroke="#333" stroke-width="2"/><line x1="1325" y1="1385.0" x2="1334" y2="1385.0" stroke="#333" stroke-width="2"/><line x1="1325" y1="1366.0" x2="1334" y2="1366.0" stroke="#333" stroke-width="2"/><line x1="1317" y1="1347.0" x2="1334" y2="1347.0" stroke="#222" stroke-width="4"/><line x1="1325" y1="1328.0" x2="1334" y2="1328.0" stroke="#333" stroke-width="2"/><line x1="1325" y1="1309.0" x2="1334" y2="1309.0" stroke="#333" stroke-width="2"/><line x1="1325" y1="1290.0" x2="1334" y2="1290.0" stroke="#333" stroke-width="2"/><line x1="1325" y1="1271.0" x2="1334" y2="1271.0" stroke="#333" stroke-width="2"/><line x1="1317" y1="1252.0" x2="1334" y2="1252.0" stroke="#222" stroke-width="4"/><line x1="1325" y1="1233.0" x2="1334" y2="1233.0" stroke="#333" stroke-width="2"/><line x1="1325" y1="1214.0" x2="1334" y2="1214.0" stroke="#333" stroke-width="2"/><line x1="1325" y1="1195.0" x2="1334" y2="1195.0" stroke="#333" stroke-width="2"/><line x1="1325" y1="1176.0" x2="1334" y2="1176.0" stroke="#333" stroke-width="2"/><line x1="1317" y1="1157.0" x2="1334" y2="1157.0" stroke="#222" stroke-width="4"/><line x1="1325" y1="1138.0" x2="1334" y2="1138.0" stroke="#333" stroke-width="2"/><line x1="1325" y1="1119.0" x2="1334" y2="1119.0" stroke="#333" stroke-width="2"/><line x1="1325" y1="1100.0" x2="1334" y2="1100.0" stroke="#333" stroke-width="2"/><line x1="1325" y1="1081.0" x2="1334" y2="1081.0" stroke="#333" stroke-width="2"/><line x1="1317" y1="1062.0" x2="1334" y2="1062.0" stroke="#222" stroke-width="4"/><line x1="1325" y1="1043.0" x2="1334" y2="1043.0" stroke="#333" stroke-width="2"/><line x1="1325" y1="1024.0" x2="1334" y2="1024.0" stroke="#333" stroke-width="2"/><line x1="1325" y1="1005.0" x2="1334" y2="1005.0" stroke="#333" stroke-width="2"/><line x1="1325" y1="986.0" x2="1334" y2="986.0" stroke="#333" stroke-width="2"/><line x1="1317" y1="967.0" x2="1334" y2="967.0" stroke="#222" stroke-width="4"/><line x1="1334" y1="1442" x2="1334" y2="1458" stroke="#222" stroke-width="5"/><line x1="3290" y1="1442" x2="3290" y2="1458" stroke="#222" stroke-width="5"/><line x1="3463" y1="1442" x2="3463" y2="1458" stroke="#222" stroke-width="5"/><line x1="3565" y1="1442" x2="3565" y2="1458" stroke="#222" stroke-width="5"/><line x1="3636" y1="1442" x2="3636" y2="1458" stroke="#222" stroke-width="3"/><text x="0" y="0" transform="translate(1311,1442) rotate(-90)" text-anchor="middle" font-family="Liberation Sans" font-size="22" fill="#777">0</text><text x="0" y="0" transform="translate(1311,1347) rotate(-90)" text-anchor="middle" font-family="Liberation Sans" font-size="22" fill="#777">20</text><text x="0" y="0" transform="translate(1311,1252) rotate(-90)" text-anchor="middle" font-family="Liberation Sans" font-size="22" fill="#777">40</text><text x="0" y="0" transform="translate(1311,1157) rotate(-90)" text-anchor="middle" font-family="Liberation Sans" font-size="22" fill="#777">60</text><text x="0" y="0" transform="translate(1311,1062) rotate(-90)" text-anchor="middle" font-family="Liberation Sans" font-size="22" fill="#777">80</text><text x="0" y="0" transform="translate(1311,986) rotate(-90)" text-anchor="middle" font-family="Liberation Sans" font-size="22" fill="#777">100</text><text transform="translate(1283,1202) rotate(-90)" text-anchor="middle" font-family="Liberation Sans" font-size="22" font-weight="700" fill="#222">a.u.</text><text x="1334" y="1484" text-anchor="middle" font-family="Liberation Sans" font-size="23" fill="#777">1E-3</text><text x="3290" y="1484" text-anchor="middle" font-family="Liberation Sans" font-size="23" fill="#777">3E0</text><text x="3463" y="1484" text-anchor="middle" font-family="Liberation Sans" font-size="23" fill="#777">5E0</text><text x="3565" y="1484" text-anchor="middle" font-family="Liberation Sans" font-size="23" fill="#777">8E0</text><text x="2484" y="1518" text-anchor="middle" font-family="Liberation Sans" font-size="24" font-weight="700" fill="#222">Q (1/A)</text></svg><div class="a" style="left:1259.0px;top:1525.9px;font-size:23.6px;line-height:23.6px;font-weight:700;color:#2020f0;font-family:'Liberation Mono', monospace;">0guides40mm_15.5m_18.0A_1.4deg</div><div class="a" style="left:1259.0px;top:1553.9px;font-size:23.6px;line-height:23.6px;font-weight:700;color:#30ee30;font-family:'Liberation Mono', monospace;">0guides40mm_15.5m_6.03A_1.4deg (OL=100%)</div><div class="a" style="left:2269.0px;top:1525.9px;font-size:23.6px;line-height:23.6px;font-weight:700;color:#f02020;font-family:'Liberation Mono', monospace;">0G40mm_15.5m_12.0A_488SVP_1.0deg (OL=50%)</div><div class="a" style="left:2269.0px;top:1553.9px;font-size:23.6px;line-height:23.6px;font-weight:700;color:#a030f0;font-family:'Liberation Mono', monospace;">7guides_2.25m_6.03A_12.2deg (OL=80%)</div><div class="a" style="left:1224px;top:132px;width:2450px;height:1367px;border:11.5px solid #fa0000;box-sizing:border-box;border-radius:3px;"></div><div class="a" style="left:2177px;top:1564px;width:1497px;height:411px;border:11.5px solid #fa0000;border-left-width:9.5px;box-sizing:border-box;border-radius:3px;"></div>
</body></html>
